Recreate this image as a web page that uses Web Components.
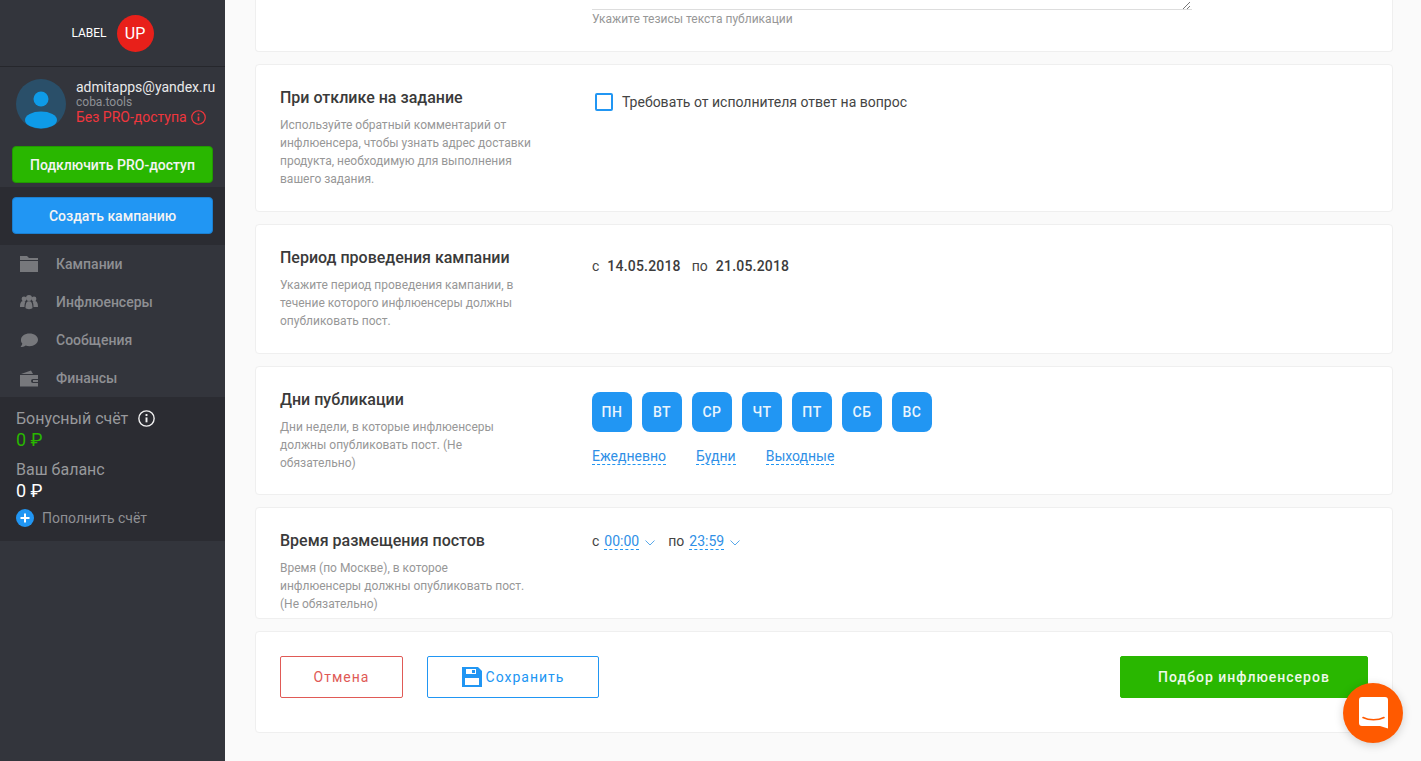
<!DOCTYPE html>
<html lang="ru">
<head>
<meta charset="utf-8">
<title>Кампания</title>
<style>
  html, body { margin: 0; height: 100%; overflow: hidden; background: #fafafa; }
  body { font-family: Roboto, "Liberation Sans", sans-serif; color: #333; }
  p { margin: 0; }
</style>
</head>
<body>
<app-shell>
  <app-sidebar slot="side"></app-sidebar>

  <form-card cut>
    <note-text>Укажите тезисы текста публикации</note-text>
  </form-card>

  <form-card heading="При отклике на задание" style="--h:148px">
    <span slot="desc">Используйте обратный комментарий от инфлюенсера, чтобы узнать адрес доставки продукта, необходимую для выполнения вашего задания.</span>
    <check-row>Требовать от исполнителя ответ на вопрос</check-row>
  </form-card>

  <form-card heading="Период проведения кампании" style="--h:130px">
    <span slot="desc">Укажите период проведения кампании, в течение которого инфлюенсеры должны опубликовать пост.</span>
    <date-range from="14.05.2018" to="21.05.2018"></date-range>
  </form-card>

  <form-card heading="Дни публикации" style="--h:129px">
    <span slot="desc">Дни недели, в которые инфлюенсеры должны опубликовать пост. (Не обязательно)</span>
    <day-picker></day-picker>
  </form-card>

  <form-card heading="Время размещения постов" style="--h:112px">
    <span slot="desc">Время (по Москве), в которое инфлюенсеры должны опубликовать пост. (Не обязательно)</span>
    <time-range from="00:00" to="23:59"></time-range>
  </form-card>

  <action-bar></action-bar>
</app-shell>
<chat-fab></chat-fab>

<script>
const html = String.raw;

function define(name, markup, init) {
  const template = document.createElement("template");
  template.innerHTML = markup;
  customElements.define(name, class extends HTMLElement {
    constructor() {
      super();
      this.attachShadow({ mode: "open" }).appendChild(template.content.cloneNode(true));
    }
    connectedCallback() {
      if (init) init(this, this.shadowRoot);
    }
  });
}

define("app-shell", html`
  <style>
    :host { display: flex; height: 761px; }
    main { flex: 1; min-width: 0; padding: 0 28px 0 30px; display: flex; flex-direction: column; gap: 12px; }
  </style>
  <slot name="side"></slot>
  <main><slot></slot></main>
`);

define("info-icon", html`
  <style>
    :host { display: inline-flex; width: 16px; height: 16px; color: inherit; }
    svg { width: 100%; height: 100%; }
  </style>
  <svg viewBox="0 0 16 16" fill="none" stroke="currentColor">
    <circle cx="8" cy="8" r="7.2" stroke-width="1.3"/>
    <path d="M8 7v4.6" stroke-width="1.8"/>
    <path d="M8 3.8v1.9" stroke-width="1.8"/>
  </svg>
`);

define("nav-item", html`
  <style>
    :host { display: flex; align-items: center; height: 38px; padding-left: 20px; color: #8e8f93; font-size: 14px; font-weight: 500; }
    .ic { width: 18px; height: 18px; margin-right: 18px; display: flex; }
  </style>
  <span class="ic"><slot name="icon"></slot></span>
  <slot></slot>
`);

define("app-sidebar", html`
  <style>
    :host { display: block; width: 225px; flex: none; height: 761px; background: #33353c; color: #fff; }
    .logo { height: 66px; border-bottom: 1px solid #26272c; box-sizing: content-box; display: flex; align-items: center; justify-content: center; gap: 10px; padding-right: 0; font-size: 12px; }
    .up { width: 37px; height: 37px; border-radius: 50%; background: #e8201a; display: flex; align-items: center; justify-content: center; font-size: 16px; }
    .user { display: flex; padding: 12px 0 0 16px; gap: 10px; height: 67px; box-sizing: border-box; }
    .ava { width: 50px; height: 50px; flex: none; }
    .who { font-size: 14px; line-height: 16px; white-space: nowrap; padding-top: 0; }
    .mail { color: #e9e9ea; }
    .org { color: #8f9196; font-size: 12px; line-height: 14px; }
    .pro { color: #f0363c; display: flex; align-items: center; gap: 4px; line-height: 17px; }
    .pro info-icon { width: 15px; height: 15px; }
    .btn { display: flex; align-items: center; justify-content: center; height: 37px; margin: 0 12px; width: 201px; box-sizing: border-box; border-radius: 4px; font-size: 14px; font-weight: 500; color: #f4f4f4; }
    .green { background: #29b700; border: 1px solid #219a00; margin-top: 12px; }
    .create { background: #2b2c32; height: 58px; margin-top: 4px; padding-top: 10px; box-sizing: border-box; }
    .blue { background: #2196f3; border: 1px solid #1a7fd0; }
    nav { padding-top: 0; }
    .money { background: #2b2c32; height: 144px; padding: 12px 16px 0; box-sizing: border-box; font-size: 16px; color: #98999c; }
    .row { display: flex; align-items: center; line-height: 19px; }
    .row info-icon { margin-left: 10px; color: #f2f2f2; width: 17px; height: 17px; }
    .sum { font-size: 18px; line-height: 24px; font-family: Roboto, sans-serif; }
    .g { color: #29b700; }
    .w { color: #fff; margin-bottom: 0; }
    .bal { margin-top: 8px; }
    .add { display: flex; align-items: center; gap: 8px; font-size: 14px; margin-top: 6px; color: #8f9094; }
    .add svg { width: 18px; height: 18px; }
  </style>
  <div class="logo"><span>LABEL</span><span class="up">UP</span></div>
  <div class="user">
    <svg class="ava" viewBox="0 0 50 50">
      <circle cx="25" cy="25" r="25" fill="#2a4f69"/>
      <circle cx="25" cy="20" r="7.5" fill="#0e9be8"/>
      <ellipse cx="25" cy="41" rx="16" ry="8.5" fill="#0e9be8"/>
    </svg>
    <div class="who">
      <div class="mail">admitapps@yandex.ru</div>
      <div class="org">coba.tools</div>
      <div class="pro">Без PRO-доступа <info-icon></info-icon></div>
    </div>
  </div>
  <div class="btn green">Подключить PRO-доступ</div>
  <div class="create"><div class="btn blue">Создать кампанию</div></div>
  <nav>
    <nav-item>
      <svg slot="icon" viewBox="0 0 18 18" fill="#77787c"><path d="M0 1h7l2 2h9v2H0zM0 6h18v11H0z"/></svg>
      Кампании
    </nav-item>
    <nav-item>
      <svg slot="icon" viewBox="0 0 18 18" fill="#77787c"><circle cx="4" cy="6" r="2.4"/><circle cx="14" cy="6" r="2.4"/><circle cx="9" cy="5" r="3"/><path d="M0 14c0-5 1.5-6 3.5-6 1 0 1.5.3 2 .8C4.700 10 4.500 12 4.500 14zM18 14c0-5-1.500-6-3.500-6-1 0-1.500.3-2 .8.800 1.200 1 3.200 1 5.200zM5.500 15c0-5 1.200-6.800 3.500-6.800s3.500 1.800 3.500 6.800c-1 1.500-6 1.500-7 0z"/></svg>
      Инфлюенсеры
    </nav-item>
    <nav-item>
      <svg slot="icon" viewBox="0 0 18 18" fill="#77787c"><path d="M9.500 2.500c4.700 0 8.500 2.700 8.500 6.300s-3.800 6.400-8.500 6.400c-1.500 0-2.700-.2-3.800-.7-1.500 1-3.300 1.500-5.200 1.500.9-1 1.600-2.200 1.800-3.500C.9 11.300 1 10 1 8.800 1 5.200 4.800 2.500 9.500 2.500z"/></svg>
      Сообщения
    </nav-item>
    <nav-item>
      <svg slot="icon" viewBox="0 0 18 18" fill="#77787c"><path d="M1 5l10-3.500 2 3.500zM0 6h18v4h-5a2 2 0 0 0 0 4h5v3.500H0z"/><path d="M13 11h5v2h-5z"/></svg>
      Финансы
    </nav-item>
  </nav>
  <div class="money">
    <div class="row">Бонусный счёт <info-icon></info-icon></div>
    <div class="sum g">0 ₽</div>
    <div class="row bal">Ваш баланс</div>
    <div class="sum w">0 ₽</div>
    <div class="add">
      <svg viewBox="0 0 18 18"><circle cx="9" cy="9" r="9" fill="#2196f3"/><path d="M9 4.500v9M4.500 9h9" stroke="#fff" stroke-width="2"/></svg>
      Пополнить счёт
    </div>
  </div>
`);

define("form-card", html`
  <style>
    :host { display: block; flex: none; background: #fff; border: 1px solid #efefef; border-radius: 4px; box-sizing: border-box; height: var(--h, auto); padding: 23px 24px 0; }
    :host([cut]) { height: 52px; padding: 0 0 0 336px; border-top: 0; border-radius: 0 0 4px 4px; }
    .cols { display: flex; }
    .left { width: 312px; flex: none; box-sizing: border-box; padding-right: 60px; }
    h2 { margin: 0 0 8px; font-size: 16px; font-weight: 500; line-height: 20px; color: #3a3a3a; white-space: nowrap; }
    .desc { font-size: 12px; line-height: 18px; color: #979797; }
    .right { flex: 1; }
    :host([cut]) .left { display: none; }
  </style>
  <div class="cols">
    <div class="left"><h2></h2><div class="desc"><slot name="desc"></slot></div></div>
    <div class="right"><slot></slot></div>
  </div>
`, (el, root) => {
  root.querySelector("h2").textContent = el.getAttribute("heading") || "";
});

define("note-text", html`
  <style>
    :host { display: block; width: 600px; position: relative; border-top: 1px solid #ddd; margin-top: 9px; padding-top: 2px; font-size: 12px; line-height: 14px; color: #979797; }
    svg { position: absolute; right: 1px; top: -9px; width: 9px; height: 8px; }
  </style>
  <svg viewBox="0 0 9 8" fill="none" stroke="#777"><path d="M1 8l7-7M5 8l3-3"/></svg>
  <slot></slot>
`);

define("check-row", html`
  <style>
    :host { display: flex; align-items: center; gap: 9px; padding: 5px 0 0 3px; font-size: 14px; line-height: 18px; color: #444; }
    i { width: 14px; height: 14px; border: 2px solid #2196f3; border-radius: 2px; flex: none; }
  </style>
  <i></i><span><slot></slot></span>
`);

define("date-range", html`
  <style>
    :host { display: flex; padding-top: 9px; font-size: 14px; line-height: 18px; color: #444; }
    b { font-weight: 500; margin: 0 11px 0 8px; letter-spacing: .2px; color: #3c3c3c; }
  </style>
  <span>с</span><b class="f"></b><span>по</span><b class="t"></b>
`, (el, root) => {
  root.querySelector(".f").textContent = el.getAttribute("from");
  root.querySelector(".t").textContent = el.getAttribute("to");
});

define("dash-link", html`
  <style>
    :host { display: inline-block; color: #2f8fe6; font-size: 14px; line-height: 16px; border-bottom: 1px dashed #2196f3; }
  </style>
  <slot></slot>
`);

define("day-chip", html`
  <style>
    :host { display: flex; align-items: center; justify-content: center; width: 40px; height: 40px; border-radius: 8px; background: #2196f3; color: #eaf5fe; font-size: 14px; font-weight: 500; letter-spacing: .5px; }
  </style>
  <slot></slot>
`);

define("day-picker", html`
  <style>
    :host { display: block; padding-top: 2px; }
    .days { display: flex; gap: 10px; }
    .links { display: flex; gap: 30px; margin-top: 16px; }
  </style>
  <div class="days">
    <day-chip>ПН</day-chip><day-chip>ВТ</day-chip><day-chip>СР</day-chip><day-chip>ЧТ</day-chip><day-chip>ПТ</day-chip><day-chip>СБ</day-chip><day-chip>ВС</day-chip>
  </div>
  <div class="links">
    <dash-link>Ежедневно</dash-link><dash-link>Будни</dash-link><dash-link>Выходные</dash-link>
  </div>
`);

define("time-range", html`
  <style>
    :host { display: flex; align-items: center; padding-top: 1px; font-size: 14px; line-height: 18px; color: #444; }
    dash-link { margin-left: 5px; }
    svg { width: 10px; height: 6px; margin: 3px 0 0 6px; }
    .po { margin-left: 13px; }
  </style>
  <span>с</span><dash-link class="f"></dash-link>
  <svg viewBox="0 0 10 6" fill="none" stroke="#5aa9ea"><path d="M.5.5L5 5 9.500.5"/></svg>
  <span class="po">по</span><dash-link class="t"></dash-link>
  <svg viewBox="0 0 10 6" fill="none" stroke="#5aa9ea"><path d="M.5.5L5 5 9.500.5"/></svg>
`, (el, root) => {
  root.querySelector(".f").textContent = el.getAttribute("from");
  root.querySelector(".t").textContent = el.getAttribute("to");
});

define("action-btn", html`
  <style>
    :host { display: inline-flex; align-items: center; justify-content: center; box-sizing: border-box; height: 42px; border-radius: 2px; border: 1px solid var(--c); color: var(--t, var(--c)); background: var(--b, transparent); font-size: 14px; letter-spacing: 1px; gap: 4px; }
  </style>
  <slot name="icon"></slot><slot></slot>
`);

define("action-bar", html`
  <style>
    :host { display: flex; flex: none; align-items: flex-start; height: 102px; box-sizing: border-box; padding: 24px 24px 0; background: #fff; border: 1px solid #efefef; border-radius: 4px; }
    .cancel { --c: #e05a56; width: 123px; }
    .save { --c: #2196f3; width: 172px; margin-left: 24px; }
    .go { --c: #29b700; --b: #29b700; --t: #eef9ea; width: 248px; margin-left: auto; font-weight: 500; }
    svg { width: 20px; height: 20px; }
  </style>
  <action-btn class="cancel">Отмена</action-btn>
  <action-btn class="save">
    <svg slot="icon" viewBox="0 0 20 20"><path fill="#2196f3" d="M0 0h16l4 4v16H0z"/><path fill="#fff" d="M3 11h14v7H3zM4 2h10v5H4z"/><path fill="#2196f3" d="M10 3h3v3h-3z"/></svg>
    Сохранить
  </action-btn>
  <action-btn class="go">Подбор инфлюенсеров</action-btn>
`);

define("chat-fab", html`
  <style>
    :host { position: fixed; left: 1343px; top: 683px; width: 60px; height: 60px; border-radius: 50%; background: #ff5a00; box-shadow: 0 2px 10px rgba(0,0,0,.18); display: flex; align-items: center; justify-content: center; }
    svg { width: 29px; height: 32px; }
  </style>
  <svg viewBox="0 0 29 32">
    <path fill="#fff" d="M3 0h23a3 3 0 0 1 3 3v28.500L21 29H3a3 3 0 0 1-3-3V3a3 3 0 0 1 3-3z"/>
    <path fill="none" stroke="#ff5a00" stroke-width="1.600" stroke-linecap="round" d="M4 20.500c6 3 15 3 21 0"/>
  </svg>
`);
</script>
</body>
</html>
